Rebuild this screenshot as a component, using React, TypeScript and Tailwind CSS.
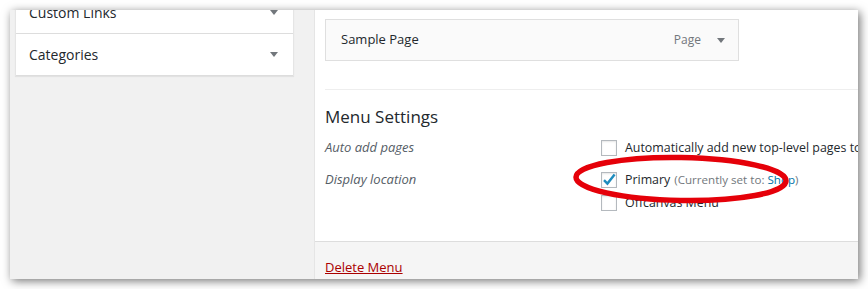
import React from 'react';

function Caret({ className = '' }: { className?: string }) {
  return (
    <svg width="8" height="5" viewBox="0 0 8 5" className={`shrink-0 ${className}`}>
      <path d="M0 0H8L4 5Z" fill="#72777c" />
    </svg>
  );
}

function Checkbox({ checked = false }: { checked?: boolean }) {
  return (
    <span className="relative block w-4 h-4 shrink-0 border border-[#b4b9be] bg-white shadow-[inset_0_1px_2px_rgba(0,0,0,0.1)]">
      {checked && (
        <svg width="16" height="16" viewBox="0 0 16 16" className="absolute -left-px -top-px">
          <path d="M3 8.2L6.4 11.6L13.6 2.6" fill="none" stroke="#1e8cbe" strokeWidth="2.4" />
        </svg>
      )}
    </span>
  );
}

export default function App() {
  return (
    <div className="w-[868px] h-[289px] bg-white p-[10px] font-['Open_Sans',sans-serif]">
      <div className="relative w-[848px] h-[269px] overflow-hidden bg-[#f1f1f1] flex shadow-[2px_2px_9px_rgba(0,0,0,0.55)]">
        {/* Accordion (left column) */}
        <div className="ml-[5px] -mt-[18px] w-[279px] self-start bg-white border-x border-[#e5e5e5] shadow-[0_1px_1px_rgba(0,0,0,0.06)]">
          {['Custom Links', 'Categories'].map((title) => (
            <div
              key={title}
              className="h-[42px] flex items-center justify-between border-b border-[#dddddd] pl-[13px] pr-[15px] text-[14px] text-[#23282d]"
            >
              <span>{title}</span>
              <Caret />
            </div>
          ))}
        </div>

        {/* Menu management (right column) */}
        <div className="ml-[20px] flex-1 min-w-0 flex flex-col bg-white border-l border-[#e5e5e5]">
          <div className="flex-1 pl-[10px] pt-[9px]">
            <div className="w-[414px] h-[42px] flex items-center border border-[#dfdfdf] bg-[#fafafa] pl-[15px] pr-[13px]">
              <span className="flex-1 text-[13px] text-[#23282d]">Sample Page</span>
              <span className="text-[12px] text-[#72777c]">Page</span>
              <Caret className="ml-[16px]" />
            </div>

            <div className="mt-[28px] h-px bg-[#eeeeee]" />

            <h3 className="mt-[15px] text-[17px] leading-[24px] text-[#23282d]">Menu Settings</h3>

            <div className="mt-[11px] flex items-center h-4 whitespace-nowrap">
              <span className="w-[276px] shrink-0 text-[13px] italic text-[#555d66]">Auto add pages</span>
              <Checkbox />
              <span className="ml-[8px] text-[12.4px] text-[#23282d]">Automatically add new top-level pages to this menu</span>
            </div>

            <div className="mt-[16px] flex whitespace-nowrap">
              <span className="w-[276px] shrink-0 h-4 flex items-center text-[13px] italic text-[#555d66]">Display location</span>
              <div className="flex flex-col gap-[7px]">
                <div className="flex items-center h-4">
                  <Checkbox checked />
                  <span className="ml-[8px] text-[12.4px] text-[#23282d]">Primary</span>
                  <span className="ml-[4px] text-[11.6px] text-[#72777c]">
                    (Currently set to: <span className="text-[#0073aa]">Shop</span>)
                  </span>
                </div>
                <div className="flex items-center h-4">
                  <Checkbox />
                  <span className="ml-[8px] text-[12.4px] text-[#23282d]">Offcanvas Menu</span>
                </div>
              </div>
            </div>
          </div>

          <div className="h-[38px] shrink-0 border-t border-[#dddddd] bg-[#f5f5f5] pl-[10px] pt-[12px]">
            <span className="text-[13px] leading-[20px] text-[#aa0000] underline">Delete Menu</span>
          </div>
        </div>

        {/* Red annotation ellipse */}
        <svg width="848" height="269" className="absolute left-0 top-0 pointer-events-none">
          <ellipse cx="671" cy="169" rx="105" ry="21.5" fill="none" stroke="#e50009" strokeWidth="5.5" transform="rotate(1 671 169)" />
        </svg>
      </div>
    </div>
  );
}
